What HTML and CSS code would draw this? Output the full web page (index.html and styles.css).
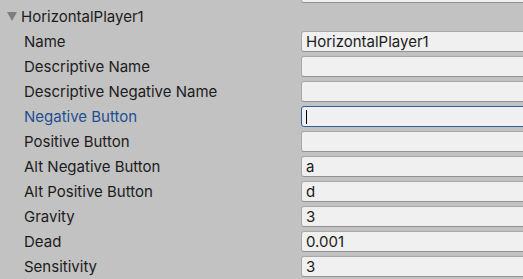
FILE: index.html
```html
<!DOCTYPE html>
<html lang="en">
<head>
    <meta charset="UTF-8">
    <title>Input Axes</title>
    <link rel="stylesheet" href="styles.css">
</head>
<body>
    <div class="inspector">
        <div class="stub"></div>
        <div class="header">
            <svg class="arrow" width="10" height="9" viewBox="0 0 10 9"><path d="M0 0 H10 L5 9 Z" fill="#7f7f7f"/></svg>
            <span>HorizontalPlayer1</span>
        </div>
        <div class="row"><div class="label">Name</div><div class="field">HorizontalPlayer1</div></div>
        <div class="row"><div class="label">Descriptive Name</div><div class="field"></div></div>
        <div class="row"><div class="label">Descriptive Negative Name</div><div class="field"></div></div>
        <div class="row"><div class="label focus-label">Negative Button</div><div class="field focused"><span class="caret"></span></div></div>
        <div class="row"><div class="label">Positive Button</div><div class="field"></div></div>
        <div class="row"><div class="label">Alt Negative Button</div><div class="field">a</div></div>
        <div class="row"><div class="label">Alt Positive Button</div><div class="field">d</div></div>
        <div class="row"><div class="label">Gravity</div><div class="field">3</div></div>
        <div class="row"><div class="label">Dead</div><div class="field">0.001</div></div>
        <div class="row"><div class="label">Sensitivity</div><div class="field">3</div></div>
    </div>
</body>
</html>
```

FILE: styles.css
```css
body {
    margin: 0;
    background-color: #c2c2c2;
    font-family: Inter, "Noto Sans", sans-serif;
    font-size: 15px;
    color: #1c1c1c;
    overflow: hidden;
}
.inspector {
    width: 540px;
}
.stub {
    margin-left: 301px;
    height: 2px;
    background-color: #f0f0f0;
    border: 1px solid #a3a3a3;
    border-top: none;
    border-bottom-color: #8f8f8f;
    border-radius: 0 0 0 3px;
}
.header {
    display: flex;
    align-items: center;
    height: 26px;
    padding-left: 7px;
}
.arrow {
    margin-right: 4px;
}
.row {
    display: flex;
    align-items: center;
    height: 25px;
}
.label {
    width: 277px;
    padding-left: 24px;
    flex-shrink: 0;
}
.focus-label {
    color: #1d4f91;
}
.field {
    flex-grow: 1;
    height: 19px;
    line-height: 19px;
    padding-left: 4px;
    background-color: #f0f0f0;
    border: 1px solid #a8a8a8;
    border-bottom-color: #929292;
    border-radius: 3px;
    display: flex;
    align-items: center;
}
.focused {
    border-color: #2f5f9c;
}
.caret {
    width: 1px;
    height: 14px;
    background-color: #000;
}
```
